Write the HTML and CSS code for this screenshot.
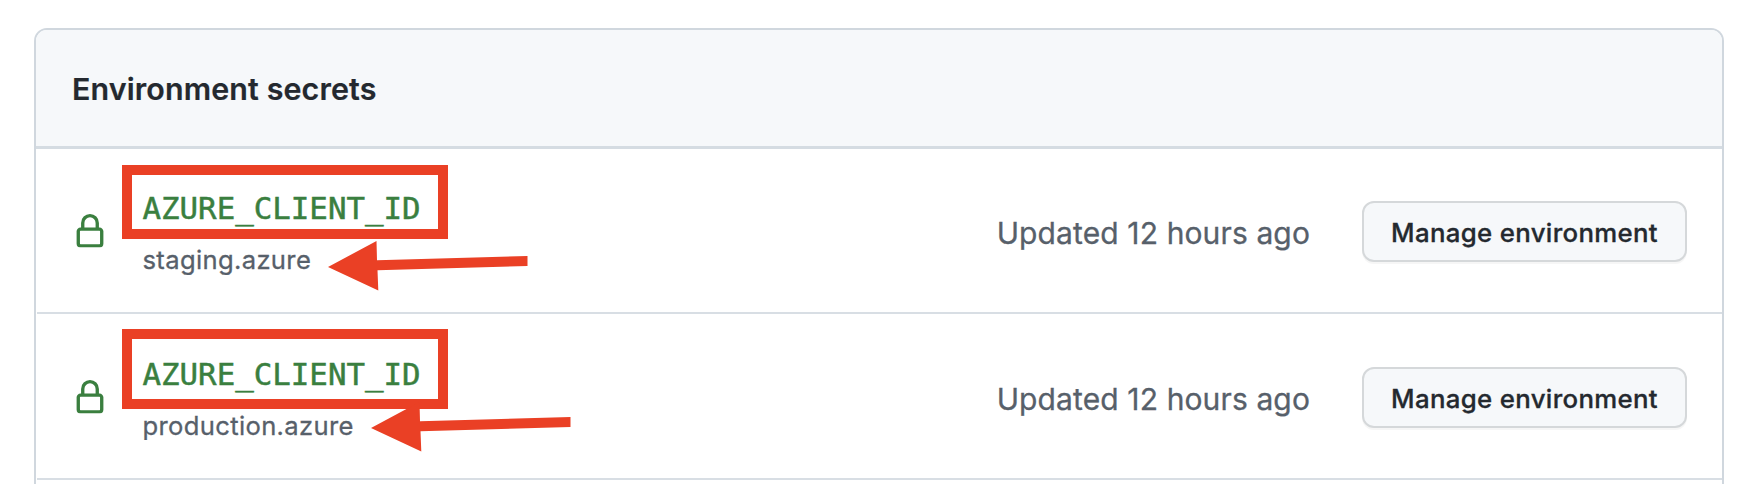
FILE: index.html
```html
<!DOCTYPE html>
<html lang="en">
<head>
<meta charset="utf-8">
<title>Environment secrets</title>
<link rel="stylesheet" href="styles.css">
</head>
<body>
<svg class="symbols" aria-hidden="true">
  <symbol id="lock" viewBox="0 0 16 15"><path d="M4 4a4 4 0 0 1 8 0v2h.25c.966 0 1.75.784 1.75 1.75v5.5A1.75 1.75 0 0 1 12.25 15h-8.5A1.75 1.75 0 0 1 2 13.25v-5.5C2 6.784 2.784 6 3.75 6H4Zm8.25 3.5h-8.5a.25.25 0 0 0-.25.25v5.5c0 .138.112.25.25.25h8.5a.25.25 0 0 0 .25-.25v-5.5a.25.25 0 0 0-.25-.25ZM10.5 6V4a2.5 2.5 0 1 0-5 0v2Z"/></symbol>
  <symbol id="arrow" viewBox="0 0 200 50"><path d="M0 26 48.5 0 49 19.2 199.5 15v10L49.5 29.2 50.3 49.5Z"/></symbol>
</svg>
<main class="card">
  <header class="card-header"><h2 class="title">Environment secrets</h2></header>
  <section class="row">
    <svg class="lock"><use href="#lock"/></svg>
    <div class="secret">
      <code class="name">AZURE_CLIENT_ID</code>
      <span class="env">staging.azure</span>
    </div>
    <span class="updated">Updated 12 hours ago</span>
    <button class="button">Manage environment</button>
    <span class="highlight highlight-first"></span>
    <svg class="arrow arrow-first"><use href="#arrow"/></svg>
  </section>
  <section class="row">
    <svg class="lock"><use href="#lock"/></svg>
    <div class="secret">
      <code class="name">AZURE_CLIENT_ID</code>
      <span class="env">production.azure</span>
    </div>
    <span class="updated">Updated 12 hours ago</span>
    <button class="button">Manage environment</button>
    <span class="highlight highlight-second"></span>
    <svg class="arrow arrow-second"><use href="#arrow"/></svg>
  </section>
</main>
</body>
</html>
```
FILE: styles.css
```css
* { box-sizing: border-box; }
html { background: #fff; }
body { margin: 0; padding: 28px 16px 0 34px; font-family: Inter, "Liberation Sans", sans-serif; color: #24292f; }
.symbols { position: absolute; width: 0; height: 0; }
.card {
  height: 456px;
  border: 2px solid #d0d7de;
  border-bottom: 0;
  border-radius: 13px 13px 0 0;
}
.card-header {
  display: flex;
  align-items: center;
  height: 119px;
  padding: 2px 36px 0;
  background: #f6f8fa;
  border-bottom: 3px solid #d5dce2;
  border-radius: 11px 11px 0 0;
}
.title { margin: 0; font-size: 30.4px; line-height: 48px; font-weight: 600; letter-spacing: 0.13px; -webkit-text-stroke: 0.2px; }
.row {
  position: relative;
  display: flex;
  align-items: flex-start;
  height: 165px;
  margin-left: 1px;
  padding: 0 35px;
  border-bottom: 2px solid #d8dee4;
}
.row + .row { height: 166px; padding-top: 1px; }
.lock { flex: none; width: 36px; height: 33.5px; margin: 65px 36px 0 -0.5px; fill: #3a7f3f; }
.secret { display: flex; flex-direction: column; flex: 1; padding-top: 35px; margin-left: -1px; }
.name { font-family: "DejaVu Sans Mono", monospace; font-size: 30.8px; line-height: 48px; color: #3a7f3f; white-space: nowrap; -webkit-text-stroke: 0.5px; }
.env { font-size: 25.6px; line-height: 36px; margin-top: 10px; color: #57606a; letter-spacing: 0.34px; white-space: nowrap; -webkit-text-stroke: 0.3px; }
.updated { margin: 60px 52px 0 0; font-size: 30px; line-height: 48px; letter-spacing: 0.12px; color: #57606a; white-space: nowrap; -webkit-text-stroke: 0.3px; }
.button {
  flex: none;
  width: 325px;
  height: 61px;
  margin-top: 52px;
  padding: 2px 0 0;
  border: 2px solid #d5d8da;
  border-radius: 12px;
  background: #f6f8fa;
  box-shadow: 0 2px 0 rgba(27, 31, 36, 0.04);
  color: #24292f;
  font: 500 25.8px/48px Inter, "Liberation Sans", sans-serif;
  letter-spacing: 0.33px;
  white-space: nowrap;
  -webkit-text-stroke: 0.3px;
}
.highlight { position: absolute; left: 85px; width: 326px; border: 10px solid #ea4025; }
.highlight-first { top: 16px; height: 74px; }
.highlight-second { top: 15px; height: 80px; }
.arrow { position: absolute; width: 200px; height: 50px; fill: #ea4025; }
.arrow-first { left: 290.5px; top: 91.5px; }
.arrow-second { left: 333.5px; top: 88px; }
```
